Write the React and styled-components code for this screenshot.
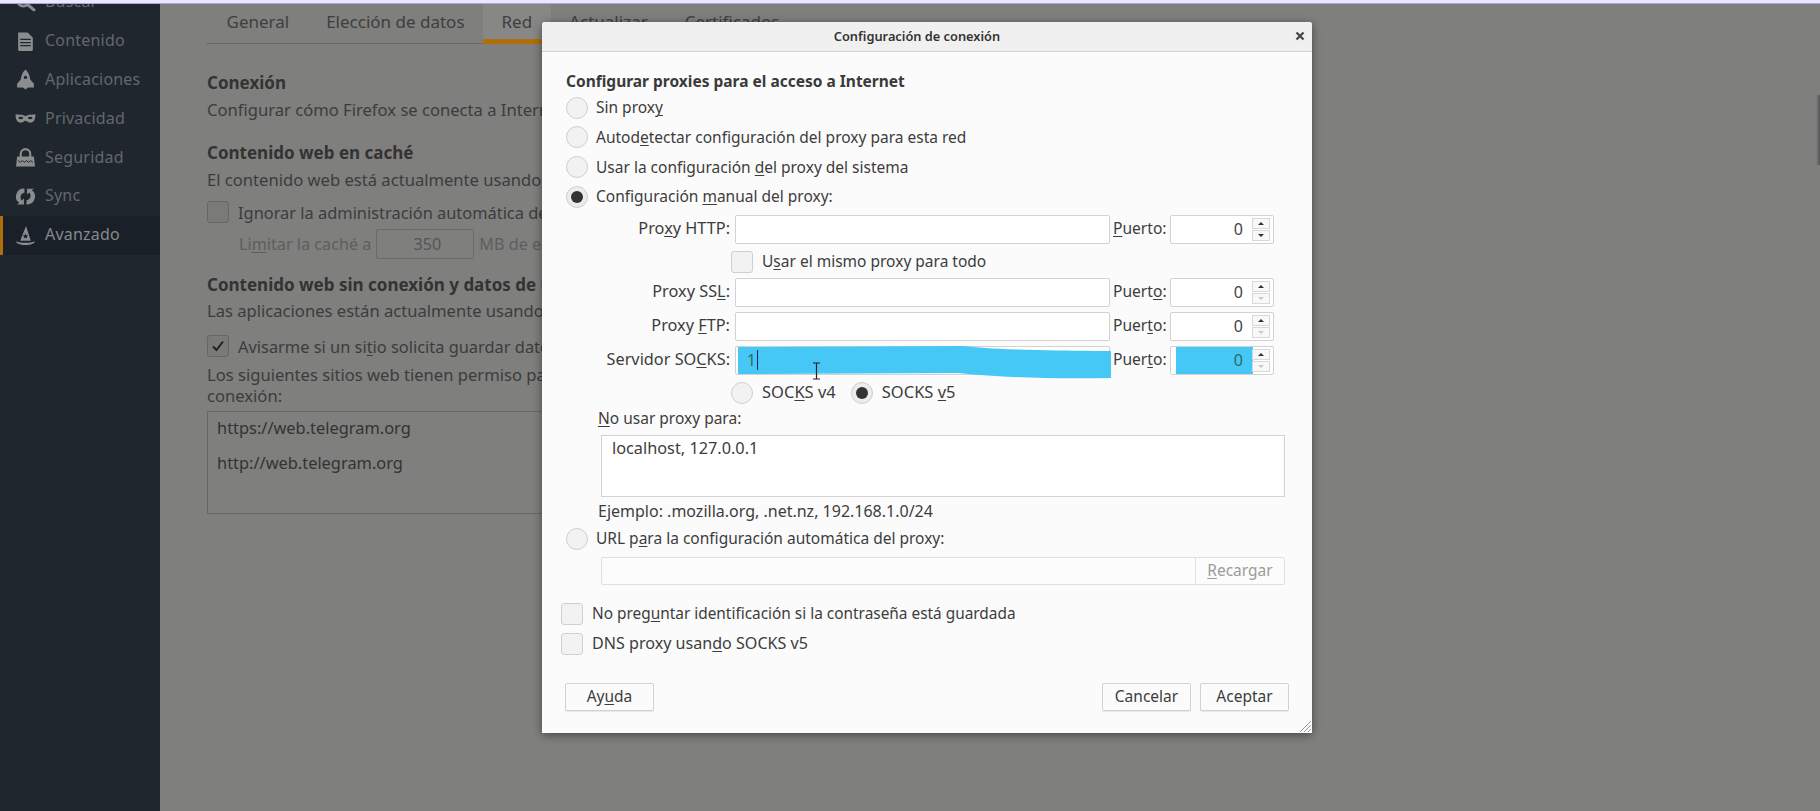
import React from "react";
import styled, { createGlobalStyle } from "styled-components";

const Global = createGlobalStyle`
  html, body { margin: 0; padding: 0; width: 1820px; height: 811px; overflow: hidden; background: #7f7f7d; }
  * { box-sizing: border-box; }
  body { font-family: "Noto Sans", "Open Sans", sans-serif; font-size: 15px; }
  u { text-underline-offset: 2px; text-decoration-thickness: 1px; }
`;

const Screen = styled.div`
  position: relative; width: 1820px; height: 811px; overflow: hidden;
  display: flex; flex-direction: column; background: #7f7f7d;
`;
const TopStrip = styled.div`
  height: 4px; flex: none; background: #ebe7ff; border-bottom: 1px solid #a9a4e6;
`;
const Page = styled.div`display: flex; flex: 1; min-height: 0;`;

const Sidebar = styled.nav`
  width: 160px; flex: none; background: #20262e; overflow: hidden;
`;
const SideList = styled.div`margin-top: -21px;`;
const SideItem = styled.div`
  height: 38.8px; display: flex; align-items: center; gap: 9px; padding-left: 14px;
  border-left: 3px solid ${p => (p.$active ? "#b06f0a" : "transparent")};
  background: ${p => (p.$active ? "#1a2027" : "transparent")};
  color: ${p => (p.$active ? "#868a8c" : "#62686c")};
  font-size: 16px; letter-spacing: .2px;
  svg { flex: none; width: 21px; height: 21px; color: #8a8d8e; margin-left: -2px; }
  span { margin-bottom: 2px; }
`;

const Main = styled.main`flex: 1; padding-left: 47px; color: #3c3c3c; font-size: 16px; min-width: 0;`;
const Tabs = styled.div`
  display: flex; width: 1100px; height: 40px; border-bottom: 1px solid #686868; margin-left: -1px; padding-left: 2px;
`;
const Tab = styled.div`
  height: 40px; display: flex; align-items: center; padding: ${p => (p.$active ? "0 18.5px" : "0 18.5px 5px")};
  font-size: 17px; color: #3e3e3e; white-space: nowrap;
  border-bottom: ${p => (p.$active ? "5px solid #b06f0a" : "none")};
  background: ${p => (p.$active ? "#878786" : "transparent")};
`;
const Heading = styled.h3`
  margin: ${p => p.$mt}px 0 0; font-size: 17px; font-weight: 700; line-height: 22px; color: #333; white-space: nowrap;
`;
const Para = styled.p`
  margin: ${p => p.$mt || 0}px 0 0; font-size: 16.6px; line-height: 21px; color: #3c3c3c; white-space: nowrap;
`;
const CheckLine = styled.div`
  display: flex; align-items: center; gap: 9px; height: 22px; margin-top: ${p => p.$mt || 0}px; white-space: nowrap; font-size: 16.4px;
`;
const DimBox = styled.span`
  width: 22px; height: 22px; flex: none; border: 1px solid #666; border-radius: 3px; background: #7a7a78;
  display: flex; align-items: center; justify-content: center; color: #222;
`;
const LimitRow = styled.div`
  display: flex; align-items: center; height: 30px; margin-top: 6px; padding-left: 32px; color: #5e5e5e; white-space: nowrap; font-size: 16.2px;
`;
const DimSpin = styled.span`
  width: 98px; height: 30px; margin: 0 5px 0 5px; border: 1px solid #6b6b6b; border-radius: 2px;
  display: flex; align-items: center; justify-content: flex-end; padding-right: 32px; color: #555;
`;
const SiteList = styled.div`
  width: 500px; height: 103px; margin-top: 5px; border: 1px solid #666; padding: 5px 9px; color: #333;
`;
const SiteRow = styled.div`height: 35px; line-height: 21px; font-size: 16.4px;`;

const Dialog = styled.section`
  position: absolute; left: 542px; top: 22px; width: 770px; height: 711px;
  background: #fbfbfb; border-radius: 3px 3px 0 0; color: #3d3d3d;
  box-shadow: 0 2px 10px rgba(0,0,0,.45);
  font-size: 15.5px;
`;
const TitleBar = styled.header`
  position: relative; height: 30px; background: #f0f0f0; border-bottom: 1px solid #d5d5d5;
  border-radius: 3px 3px 0 0; display: flex; align-items: center; justify-content: center;
  font-size: 12.8px; font-weight: 600; color: #333; padding: 0 20px 2px 0;
`;
const CloseBtn = styled.span`
  position: absolute; right: 5px; top: 7px; width: 14px; height: 14px; color: #444;
  svg { display: block; }
`;
const Body = styled.div`padding: 19px 0 0 24px; display: flex; flex-direction: column; align-items: flex-start;`;
const DialogHeading = styled.h2`
  margin: 0; font-size: 15.5px; font-weight: 700; line-height: 20px; color: #3a3a3a; white-space: nowrap;
`;
const Radios = styled.div`display: flex; flex-direction: column; margin-top: 2px; margin-bottom: 3px;`;
const Line = styled.label`
  display: flex; align-items: center; gap: ${p => p.$gap ?? 8}px; height: ${p => p.$h || 29.67}px;
  margin: ${p => p.$mt || 0}px 0 0 ${p => p.$ml || 0}px; white-space: nowrap;
  font-size: ${p => p.$fs || 15.5}px;
  > span:last-child { margin-bottom: 1px; }
`;
const Radio = styled.span`
  width: 22px; height: 22px; flex: none; border-radius: 50%; border: 1px solid #cfcfcf;
  background: ${p => (p.$on ? "#ececec" : "#f2f2f2")};
  display: flex; align-items: center; justify-content: center;
  &::after { content: ""; display: ${p => (p.$on ? "block" : "none")}; width: 12px; height: 12px; border-radius: 50%; background: #333; }
`;
const Box = styled.span`
  width: 22px; height: 22px; flex: none; border: 1px solid #d0d0d0; border-radius: 3px; background: #f2f2f2;
`;
const ProxyRow = styled.div`
  display: flex; align-items: center; height: 29px; margin-top: ${p => p.$mt}px;
`;
const FieldLabel = styled.span`width: 164px; text-align: right; white-space: nowrap; flex: none; font-size: 16.3px; margin-bottom: 2px;`;
const Field = styled.div`
  position: relative; width: 375px; height: 29px; margin-left: 5px; flex: none;
  border: 1px solid #d2d2d2; border-radius: 2px; background: #fff;
  display: flex; align-items: center; padding-left: 12px;
`;
const PortLabel = styled.span`width: 54px; margin: 0 0 2px 3px; white-space: nowrap; flex: none; font-size: 15.6px;`;
const Spin = styled.div`
  position: relative; width: 104px; height: 29px; margin-left: 3px; flex: none;
  border: 1px solid #d2d2d2; background: #fff; border-radius: 2px;
  display: flex; align-items: center; justify-content: flex-end; padding-right: 30px; font-size: 16px;
  color: ${p => (p.$sel ? "#2f6a62" : "#444")};
`;
const SpinFill = styled.span`
  position: absolute; left: 5px; top: 0; bottom: 0; width: 77px; background: #45c8f6;
`;
const SpinValue = styled.span`position: relative;`;
const SpinBtns = styled.span`
  position: absolute; right: 3px; top: 2px; width: 18px; height: 23px;
  display: flex; flex-direction: column; gap: 1px;
`;
const SpinBtn = styled.span`
  flex: 1; border: 1px solid #d8d8d8; background: #f8f8f8; display: flex; align-items: center; justify-content: center;
  &::after {
    content: ""; width: 0; height: 0; border-left: 3px solid transparent; border-right: 3px solid transparent;
    ${p => (p.$down ? "border-top" : "border-bottom")}: 3px solid ${p => (p.$off ? "#c9c9c9" : "#333")};
  }
`;
const Scribble = styled.svg`
  position: absolute; left: 2px; top: -2px; width: 373px; height: 35px; display: block;
`;
const Typed = styled.span`
  position: relative; color: #2f6a62; font-size: 15.5px; padding-right: 1px; border-right: 1px solid #225; line-height: 20px; margin-left: -1px;
`;
const IBeam = styled.svg`position: absolute; left: 76px; top: 15px; width: 9px; height: 18px; color: #222;`;
const SocksRow = styled.div`
  display: flex; align-items: center; height: 22px; margin: 7px 0 0 165px; white-space: nowrap; font-size: 16.5px;
`;
const SocksItem = styled.label`
  display: flex; align-items: center; gap: 9px; margin-right: ${p => p.$mr || 0}px;
  > span:last-child { margin-bottom: 2px; }
`;
const PlainText = styled.div`
  line-height: 20px; margin: ${p => p.$mt}px 0 0 ${p => p.$ml}px; white-space: nowrap; font-size: ${p => p.$fs || 15.5}px;
`;
const TextArea = styled.div`
  width: 684px; height: 62px; margin: 7px 0 0 35px; border: 1px solid #d2d2d2; background: #fff;
  padding: 2px 10px; line-height: 20px; font-size: 16.3px;
`;
const UrlBox = styled.div`
  width: 684px; height: 28px; margin: 7px 0 0 35px; border: 1px solid #e0e0e0; background: #fcfcfc;
  display: flex; justify-content: flex-end; border-radius: 2px;
`;
const Reload = styled.span`
  width: 89px; border-left: 1px solid #e0e0e0; color: #9b9b9b; display: flex; align-items: center; justify-content: center;
  > span { margin-bottom: 2px; }
`;
const Footer = styled.div`
  display: flex; justify-content: space-between; width: 724px; margin-top: 28px; margin-left: -1px;
`;
const FooterGroup = styled.div`display: flex; gap: 9px;`;
const Button = styled.button`
  width: 89px; height: 28px; padding: 0 0 2px; border: 1px solid #d2d2d2; border-radius: 2px; background: #fbfbfb;
  font: inherit; color: #3d3d3d; box-shadow: 0 1px 0 #e8e8e8;
`;
const Grip = styled.svg`position: absolute; right: 0; bottom: 0; width: 13px; height: 13px;`;
const EdgeShadow = styled.div`
  position: absolute; right: 0; top: 95px; width: 4px; height: 70px;
  background: linear-gradient(to right, transparent, #555);
`;

const Icon = ({ children }) => <svg viewBox="0 0 20 20" fill="currentColor">{children}</svg>;
const icons = {
  search: <Icon><circle cx="8" cy="8" r="5.5" fill="none" stroke="currentColor" strokeWidth="2.6" /><path d="M12 12l6 5" stroke="currentColor" strokeWidth="3" strokeLinecap="round" /></Icon>,
  doc: <Icon><path d="M3 1.5h9l5 5v11a1.5 1.5 0 0 1-1.5 1.5h-11A1.5 1.5 0 0 1 3 17.5z" /><path d="M5 8h10M5 11h10M5 14h10" stroke="#20262e" strokeWidth="1.2" /></Icon>,
  rocket: <Icon><path d="M10 0.500c3 2.600 4.200 6 4.500 9.500l3.500 4v3.500h-5.500L10 19.500l-2.500-2H2V14l3.500-4c.3-3.500 1.500-6.900 4.500-9.500z" /><circle cx="10" cy="8" r="1.600" fill="#20262e" /></Icon>,
  mask: <Icon><path d="M0.5 6c3 .5 6 .3 7.5.8.9.3 1.3.7 2 .7s1.100-.4 2-.7c1.500-.5 4.500-.3 7.500-.8 0 5-1.800 8-5 8-2.300 0-3.300-1.800-4.500-1.800S7.800 14 5.500 14C2.300 14 .5 11 .5 6z" /><ellipse cx="5.500" cy="9.500" rx="2.200" ry="1.200" fill="#20262e" /><ellipse cx="14.500" cy="9.500" rx="2.200" ry="1.200" fill="#20262e" /></Icon>,
  lock: <Icon><path d="M5.500 10V6.500a4.500 4.500 0 0 1 9 0V10" fill="none" stroke="currentColor" strokeWidth="2" /><path d="M2 9h16l1 9.500H1z" /><path d="M3 13l2 1.500 2-1.500 2 1.500 2-1.500 2 1.500 2-1.500 2 1.500" fill="none" stroke="#20262e" strokeWidth=".9" /></Icon>,
  sync: <Icon><path d="M9 2.500A7.500 7.500 0 0 0 4 16l-2 1.500h6.500V12L6.300 13.800C4 11 5.500 7 9 6.500z" /><path d="M11 17.500A7.500 7.500 0 0 0 16 4l2-1.500h-6.500V8l2.200-1.800C16 9 14.500 13 11 13.500z" /></Icon>,
  hat: <Icon><path d="M10.500 1l1 3 3.500 11H5L8.500 6z" /><path d="M1 15.500c2.500 1 5.500 1.500 9 1.500s6.500-.5 9-1.500c-.5 2.500-4 3.500-9 3.500s-8.500-1-9-3.500z" /><path d="M10 8l.8 1.700 1.800.2-1.300 1.200.4 1.800-1.700-.9-1.700.9.400-1.800-1.300-1.200 1.800-.2z" fill="#1a2027" /></Icon>,
};

const Check = () => (
  <svg width="16" height="16" viewBox="0 0 16 16"><path d="M3 8.500l3.500 3.500L13 3.500" fill="none" stroke="currentColor" strokeWidth="2" /></svg>
);

function SpinBox({ value, off, sel }) {
  return (
    <Spin $sel={sel}>
      {sel && <SpinFill />}
      <SpinValue>{value}</SpinValue>
      <SpinBtns>
        <SpinBtn />
        <SpinBtn $down $off={off} />
      </SpinBtns>
    </Spin>
  );
}

const nav = [
  ["search", "Buscar"], ["doc", "Contenido"], ["rocket", "Aplicaciones"], ["mask", "Privacidad"],
  ["lock", "Seguridad"], ["sync", "Sync"], ["hat", "Avanzado"],
];

export default function App() {
  return (
    <Screen>
      <Global />
      <TopStrip />
      <Page>
        <Sidebar>
          <SideList>
            {nav.map(([ic, label]) => (
              <SideItem key={label} $active={label === "Avanzado"}>
                {icons[ic]}
                <span>{label}</span>
              </SideItem>
            ))}
          </SideList>
        </Sidebar>
        <Main>
          <Tabs>
            <Tab>General</Tab>
            <Tab>Elección de datos</Tab>
            <Tab $active>Red</Tab>
            <Tab>Actualizar</Tab>
            <Tab>Certificados</Tab>
          </Tabs>
          <Heading $mt={28}>Conexión</Heading>
          <Para $mt={5}>Configurar cómo Firefox se conecta a Internet</Para>
          <Heading $mt={22}>Contenido web en caché</Heading>
          <Para $mt={5}>El contenido web está actualmente usando 0 bytes</Para>
          <CheckLine $mt={11}><DimBox /><span>Ignorar la administración automática de caché</span></CheckLine>
          <LimitRow>
            <span>Li<u>m</u>itar la caché a</span><DimSpin>350</DimSpin>MB de espacio
          </LimitRow>
          <Heading $mt={15}>Contenido web sin conexión y datos de usuario</Heading>
          <Para $mt={4}>Las aplicaciones están actualmente usando 0 bytes</Para>
          <CheckLine $mt={14}><DimBox><Check /></DimBox><span>Avisarme si un si<u>t</u>io solicita guardar datos</span></CheckLine>
          <Para $mt={7}>Los siguientes sitios web tienen permiso para guardar datos sin</Para>
          <Para>conexión:</Para>
          <SiteList>
            <SiteRow>https://web.telegram.org</SiteRow>
            <SiteRow>http://web.telegram.org</SiteRow>
          </SiteList>
        </Main>
      </Page>
      <EdgeShadow />
      <Dialog>
        <TitleBar>
          Configuración de conexión
          <CloseBtn>
            <svg width="14" height="14" viewBox="0 0 14 14"><path d="M3.500 3.500l7 7M10.500 3.500l-7 7" stroke="currentColor" strokeWidth="2.200" /></svg>
          </CloseBtn>
        </TitleBar>
        <Body>
          <DialogHeading>Configurar proxies para el acceso a Internet</DialogHeading>
          <Radios>
            <Line><Radio /><span>Sin prox<u>y</u></span></Line>
            <Line><Radio /><span>Autod<u>e</u>tectar configuración del proxy para esta red</span></Line>
            <Line><Radio /><span>Usar la configuración <u>d</u>el proxy del sistema</span></Line>
            <Line><Radio $on /><span>Configuración <u>m</u>anual del proxy:</span></Line>
          </Radios>
          <ProxyRow $mt={0}>
            <FieldLabel>Pro<u>x</u>y HTTP:</FieldLabel><Field />
            <PortLabel><u>P</u>uerto:</PortLabel><SpinBox value="0" />
          </ProxyRow>
          <Line $h={22} $mt={7} $ml={165} $gap={9}><Box /><span>U<u>s</u>ar el mismo proxy para todo</span></Line>
          <ProxyRow $mt={5}>
            <FieldLabel>Proxy SS<u>L</u>:</FieldLabel><Field />
            <PortLabel>Puert<u>o</u>:</PortLabel><SpinBox value="0" off />
          </ProxyRow>
          <ProxyRow $mt={5}>
            <FieldLabel>Proxy <u>F</u>TP:</FieldLabel><Field />
            <PortLabel>Puer<u>t</u>o:</PortLabel><SpinBox value="0" off />
          </ProxyRow>
          <ProxyRow $mt={5}>
            <FieldLabel>Servidor SO<u>C</u>KS:</FieldLabel>
            <Field>
              <Scribble viewBox="0 0 373 35" preserveAspectRatio="none">
                <path d="M0 2 L225 1 C250 4 280 5 373 6 L373 33 C320 34 270 33 220 28 L0 29 Z" fill="#45c8f6" />
              </Scribble>
              <Typed>1</Typed>
              <IBeam viewBox="0 0 9 18"><path d="M1 1h7M4.500 1v16M1 17h7" fill="none" stroke="currentColor" strokeWidth="1.200" /></IBeam>
            </Field>
            <PortLabel>Puer<u>t</u>o:</PortLabel><SpinBox value="0" off sel />
          </ProxyRow>
          <SocksRow>
            <SocksItem $mr={15}><Radio /><span>SOC<u>K</u>S v4</span></SocksItem>
            <SocksItem><Radio $on /><span>SOCKS <u>v</u>5</span></SocksItem>
          </SocksRow>
          <PlainText $mt={4} $ml={32}><u>N</u>o usar proxy para:</PlainText>
          <TextArea>localhost, 127.0.0.1</TextArea>
          <PlainText $mt={4} $ml={32} $fs={16}>Ejemplo: .mozilla.org, .net.nz, 192.168.1.0/24</PlainText>
          <Line $h={22} $mt={7} $gap={8}><Radio /><span>URL p<u>a</u>ra la configuración automática del proxy:</span></Line>
          <UrlBox><Reload><span><u>R</u>ecargar</span></Reload></UrlBox>
          <Line $h={22} $mt={18} $ml={-5} $gap={9} $fs={15.4}><Box /><span>No preg<u>u</u>ntar identificación si la contraseña está guardada</span></Line>
          <Line $h={22} $mt={8} $ml={-5} $gap={9} $fs={16.1}><Box /><span>DNS proxy usan<u>d</u>o SOCKS v5</span></Line>
          <Footer>
            <Button>Ay<u>u</u>da</Button>
            <FooterGroup>
              <Button>Cancelar</Button>
              <Button>Aceptar</Button>
            </FooterGroup>
          </Footer>
        </Body>
        <Grip viewBox="0 0 13 13"><path d="M1 12L12 1M5 12l7-7M9 12l3-3" stroke="#9a9a9a" strokeWidth="1" /></Grip>
      </Dialog>
    </Screen>
  );
}
